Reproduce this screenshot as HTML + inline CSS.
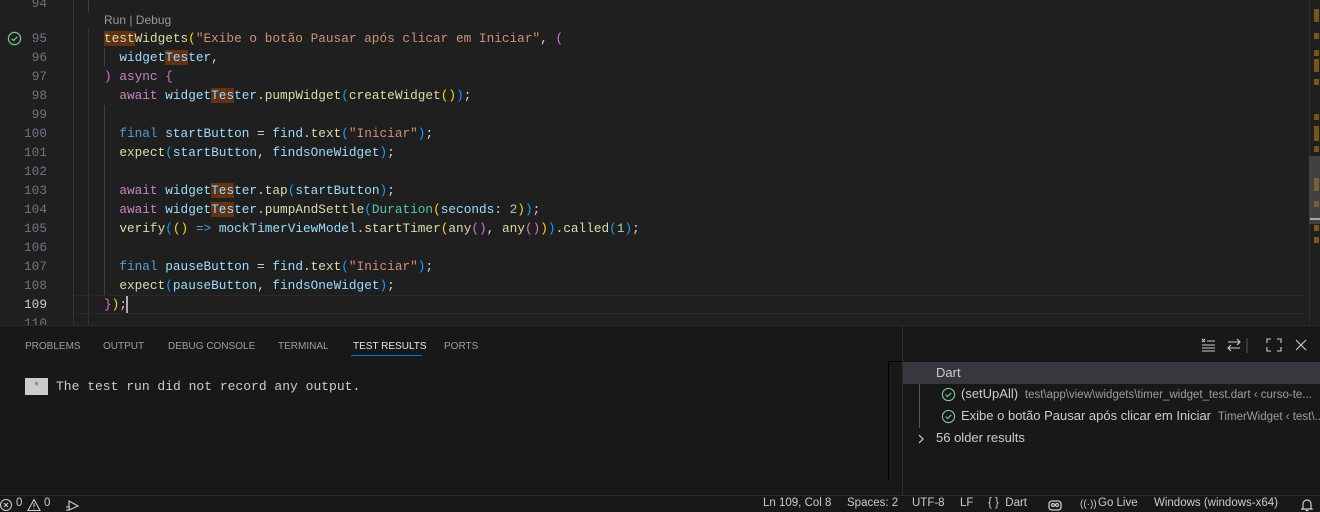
<!DOCTYPE html>
<html><head><meta charset="utf-8"><style>
*{margin:0;padding:0;box-sizing:border-box}
body{width:1320px;height:512px;background:#1f1f1f;position:relative;overflow:hidden;font-family:"Liberation Sans",sans-serif}
.mono{font-family:"Liberation Mono",monospace;font-size:12.75px}
.ln{position:absolute;left:0;width:47px;text-align:right;color:#6e7681;height:19px;line-height:19px}
.code{position:absolute;left:104px;height:19px;line-height:19px;white-space:pre;color:#d4d4d4}
.f{color:#dcdcaa}.s{color:#ce9178}.k{color:#569cd6}.c{color:#c586c0}.v{color:#9cdcfe}.t{color:#4ec9b0}.n{color:#b5cea8}
.b1{color:#ffd700}.b2{color:#da70d6}.b3{color:#179fff}
.h{background:#613214}
.guide{position:absolute;width:1px;background:#404040}
.panel{position:absolute;left:0;top:325px;width:1320px;height:170px;background:#181818;border-top:1px solid #2b2b2b}
.tab{position:absolute;top:15px;font-size:10px;color:#9d9d9d}
.status{position:absolute;left:0;top:495px;width:1320px;height:17px;background:#181818;border-top:1px solid #2b2b2b;color:#ccc;font-size:11.5px}
.status span{position:absolute;top:1px}
</style></head><body>
<div class="guide" style="left:73px;top:0;height:325px;background:#333"></div>
<div class="guide" style="left:88px;top:0;height:12px"></div>
<div class="guide" style="left:88px;top:28px;height:297px;background:#333"></div>
<div class="guide" style="left:104px;top:48px;height:19px"></div>
<div class="guide" style="left:104px;top:105px;height:190px"></div>
<div style="position:absolute;left:74px;top:295px;width:1230px;height:19px;border-top:1px solid #282828;border-bottom:1px solid #282828"></div>
<div class="mono">
<div class="ln" style="top:-6px">94</div>
<div style="position:absolute;left:104px;top:13px;font-family:'Liberation Sans',sans-serif;font-size:12px;color:#999">Run | Debug</div>
<svg style="position:absolute;left:7px;top:31px" width="15" height="15" viewBox="0 0 16 16"><circle cx="8" cy="8" r="6.5" fill="none" stroke="#73c991" stroke-width="1.3"/><path d="M5 8.2l2 2 4-4" fill="none" stroke="#73c991" stroke-width="1.3"/></svg>
<div class="ln" style="top:29px">95</div><div class="code" style="top:29px"><span class="f"><span class="h">test</span>Widgets</span><span class="b1">(</span><span class="s">"Exibe o botão Pausar após clicar em Iniciar"</span>, <span class="b2">(</span></div>
<div class="ln" style="top:48px">96</div><div class="code" style="top:48px">  <span class="v">widget<span class="h">Tes</span>ter</span>,</div>
<div class="ln" style="top:67px">97</div><div class="code" style="top:67px"><span class="b2">)</span> <span class="c">async</span> <span class="b2">{</span></div>
<div class="ln" style="top:86px">98</div><div class="code" style="top:86px">  <span class="c">await</span> <span class="v">widget<span class="h">Tes</span>ter</span>.<span class="f">pumpWidget</span><span class="b3">(</span><span class="f">createWidget</span><span class="b1">()</span><span class="b3">)</span>;</div>
<div class="ln" style="top:105px">99</div>
<div class="ln" style="top:124px">100</div><div class="code" style="top:124px">  <span class="k">final</span> <span class="v">startButton</span> = <span class="v">find</span>.<span class="f">text</span><span class="b3">(</span><span class="s">"Iniciar"</span><span class="b3">)</span>;</div>
<div class="ln" style="top:143px">101</div><div class="code" style="top:143px">  <span class="f">expect</span><span class="b3">(</span><span class="v">startButton</span>, <span class="v">findsOneWidget</span><span class="b3">)</span>;</div>
<div class="ln" style="top:162px">102</div>
<div class="ln" style="top:181px">103</div><div class="code" style="top:181px">  <span class="c">await</span> <span class="v">widget<span class="h">Tes</span>ter</span>.<span class="f">tap</span><span class="b3">(</span><span class="v">startButton</span><span class="b3">)</span>;</div>
<div class="ln" style="top:200px">104</div><div class="code" style="top:200px">  <span class="c">await</span> <span class="v">widget<span class="h">Tes</span>ter</span>.<span class="f">pumpAndSettle</span><span class="b3">(</span><span class="t">Duration</span><span class="b1">(</span><span class="v">seconds</span>: <span class="n">2</span><span class="b1">)</span><span class="b3">)</span>;</div>
<div class="ln" style="top:219px">105</div><div class="code" style="top:219px">  <span class="f">verify</span><span class="b3">(</span><span class="b1">()</span> <span class="k">=&gt;</span> <span class="v">mockTimerViewModel</span>.<span class="f">startTimer</span><span class="b1">(</span><span class="f">any</span><span class="b2">()</span>, <span class="f">any</span><span class="b2">()</span><span class="b1">)</span><span class="b3">)</span>.<span class="f">called</span><span class="b3">(</span><span class="n">1</span><span class="b3">)</span>;</div>
<div class="ln" style="top:238px">106</div>
<div class="ln" style="top:257px">107</div><div class="code" style="top:257px">  <span class="k">final</span> <span class="v">pauseButton</span> = <span class="v">find</span>.<span class="f">text</span><span class="b3">(</span><span class="s">"Iniciar"</span><span class="b3">)</span>;</div>
<div class="ln" style="top:276px">108</div><div class="code" style="top:276px">  <span class="f">expect</span><span class="b3">(</span><span class="v">pauseButton</span>, <span class="v">findsOneWidget</span><span class="b3">)</span>;</div>
<div class="ln" style="top:295px;color:#ccc">109</div><div class="code" style="top:295px"><span class="b2">}</span><span class="b1">)</span>;</div>
<div style="position:absolute;left:126px;top:296px;width:2px;height:17px;background:#aeafad"></div>
<div class="ln" style="top:314px">110</div>
</div>
<div style="position:absolute;left:1309px;top:0;width:1px;height:325px;background:#2b2b2b"></div>
<div style="position:absolute;left:1309px;top:156px;width:11px;height:68px;background:#4a4a4a;opacity:.8"></div>
<div style="position:absolute;left:1310px;top:218px;width:10px;height:2px;background:#aaa"></div>
<div style="position:absolute;left:1314px;top:9px;width:5px;height:13px;background:#7a5518"></div>
<div style="position:absolute;left:1314px;top:33px;width:5px;height:6px;background:#7a5518"></div>
<div style="position:absolute;left:1314px;top:50px;width:5px;height:6px;background:#7a5518"></div>
<div style="position:absolute;left:1314px;top:59px;width:5px;height:13px;background:#7a5518"></div>
<div style="position:absolute;left:1314px;top:79px;width:5px;height:6px;background:#7a5518"></div>
<div style="position:absolute;left:1314px;top:114px;width:5px;height:6px;background:#7a5518"></div>
<div style="position:absolute;left:1314px;top:126px;width:5px;height:15px;background:#7a5518"></div>
<div style="position:absolute;left:1314px;top:146px;width:5px;height:6px;background:#7a5518"></div>
<div style="position:absolute;left:1314px;top:178px;width:5px;height:13px;background:#7a6030"></div>
<div style="position:absolute;left:1314px;top:201px;width:5px;height:6px;background:#7a6030"></div>
<div style="position:absolute;left:1314px;top:225px;width:5px;height:6px;background:#7a5518"></div>
<div style="position:absolute;left:1314px;top:237px;width:5px;height:6px;background:#7a5518"></div>
<div class="panel">
<span class="tab" style="left:25px">PROBLEMS</span>
<span class="tab" style="left:103px">OUTPUT</span>
<span class="tab" style="left:168px">DEBUG CONSOLE</span>
<span class="tab" style="left:278px">TERMINAL</span>
<span class="tab" style="left:353px;color:#e7e7e7">TEST RESULTS</span>
<div style="position:absolute;left:351px;top:29px;width:71px;height:1px;background:#0078d4"></div>
<span class="tab" style="left:444px">PORTS</span>
<div style="position:absolute;left:25px;top:52px;width:23px;height:17px;background:#ccc;color:#666;font-size:11px;text-align:center;line-height:17px">*</div>
<div class="mono" style="position:absolute;left:56px;top:52px;line-height:17px;color:#ccc;font-size:13px">The test run did not record any output.</div>
<svg style="position:absolute;left:1200px;top:11px" width="110" height="16" viewBox="0 0 110 16" fill="none" stroke="#ccc" stroke-width="1.1">
<path d="M2 2l3 3M5 2l-3 3M7 4h8M2 8h13M2 11h13M2 14h13"/>
<path d="M28 5h12M37 2l3 3-3 3M40 11H28M31 8l-3 3 3 3"/>
<path d="M47 1v15" stroke="#555"/>
<path d="M67 6V2h4M77 2h4v4M81 10v4h-4M71 14h-4v-4"/>
<path d="M96 3l10 10M106 3L96 13"/>
</svg>
<div style="position:absolute;left:888px;top:35px;width:14px;height:1px;background:#000"></div>
<div style="position:absolute;left:888px;top:35px;width:1px;height:120px;background:#000"></div>
<div style="position:absolute;left:902px;top:0px;width:1px;height:170px;background:#2b2b2b"></div>
<div style="position:absolute;left:903px;top:36px;width:417px;height:22px;background:#37373d;color:#ccc;font-size:13px;line-height:22px;padding-left:33px">Dart</div>
<div style="position:absolute;left:919px;top:58px;width:1px;height:44px;background:#585858"></div>
<svg style="position:absolute;left:941px;top:61px" width="15" height="15" viewBox="0 0 16 16"><circle cx="8" cy="8" r="6.5" fill="none" stroke="#73c991" stroke-width="1.2"/><path d="M5 8.2l2 2 4-4" fill="none" stroke="#73c991" stroke-width="1.2"/></svg>
<div style="position:absolute;left:961px;top:60px;white-space:nowrap;font-size:13px;color:#ccc">(setUpAll) <span style="font-size:11.5px;color:#9d9d9d">&nbsp;test\app\view\widgets\timer_widget_test.dart ‹ curso-te...</span></div>
<svg style="position:absolute;left:941px;top:83px" width="15" height="15" viewBox="0 0 16 16"><circle cx="8" cy="8" r="6.5" fill="none" stroke="#73c991" stroke-width="1.2"/><path d="M5 8.2l2 2 4-4" fill="none" stroke="#73c991" stroke-width="1.2"/></svg>
<div style="position:absolute;left:961px;top:82px;white-space:nowrap;font-size:13px;color:#ccc">Exibe o botão Pausar após clicar em Iniciar <span style="font-size:11.5px;color:#9d9d9d">&nbsp;TimerWidget ‹ test\...</span></div>
<svg style="position:absolute;left:916px;top:107px" width="10" height="12" viewBox="0 0 10 12"><path d="M3 2l4 4-4 4" fill="none" stroke="#ccc" stroke-width="1.2"/></svg>
<div style="position:absolute;left:936px;top:104px;font-size:13px;color:#ccc">56 older results</div>
</div>
<div class="status">
<svg style="position:absolute;left:0;top:2px" width="80" height="14" viewBox="0 0 80 14" fill="none" stroke="#ccc" stroke-width="1.1"><circle cx="6" cy="7" r="5.5"/><path d="M4 5l4 4M8 5l-4 4"/><path d="M34 1.5l6 11H28z"/><path d="M34 5v4M34 10.5v.8"/><path d="M69 3l9 5-9 4zM66 9h4M66 12h4"/></svg>
<span style="left:16px">0</span><span style="left:44px">0</span>
<span style="left:763px">Ln 109, Col 8</span>
<span style="left:847px">Spaces: 2</span>
<span style="left:912px">UTF-8</span>
<span style="left:960px">LF</span>
<span style="left:988px">{ }&nbsp; Dart</span>
<svg style="position:absolute;left:1047px;top:2px" width="16" height="14" viewBox="0 0 16 14" fill="none" stroke="#ccc" stroke-width="1.3"><rect x="2" y="3" width="12" height="9" rx="3"/><circle cx="6" cy="7" r="1.5"/><circle cx="10" cy="7" r="1.5"/></svg>
<span style="left:1080px;font-size:10px;top:3px">((·))</span>
<span style="left:1098px">Go Live</span>
<span style="left:1154px">Windows (windows-x64)</span>
<svg style="position:absolute;left:1300px;top:2px" width="14" height="14" viewBox="0 0 14 14" fill="none" stroke="#ccc" stroke-width="1.2"><path d="M3 10V6a4 4 0 018 0v4l1 1H2zM5.5 12.5h3"/></svg>
</div>
</body></html>
